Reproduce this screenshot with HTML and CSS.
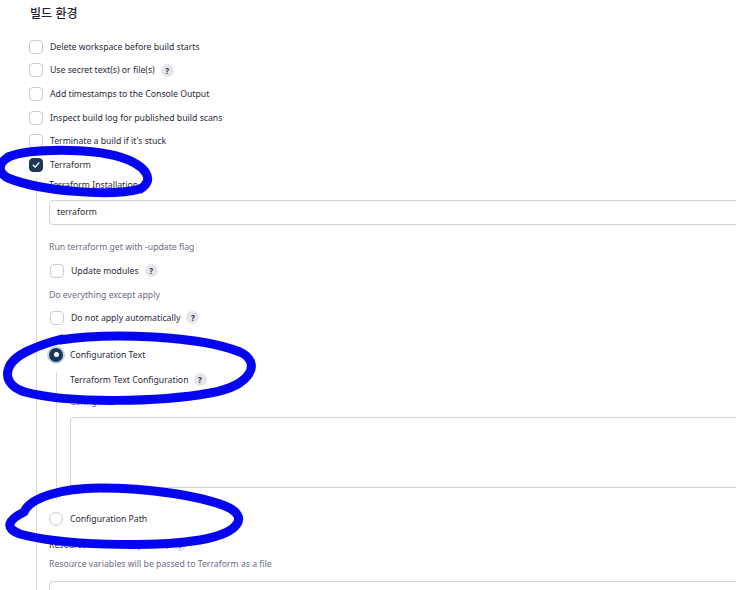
FILE: index.html
```html
<!DOCTYPE html>
<html lang="ko">
<head>
    <meta charset="UTF-8">
    <title>빌드 환경</title>
    <link rel="stylesheet" href="styles.css">
</head>
<body>
    <div class="page">
        <div class="title">빌드 환경</div>

        <div class="check-row"><span class="box"></span><span>Delete workspace before build starts</span></div>
        <div class="check-row"><span class="box"></span><span>Use secret text(s) or file(s)</span><span class="help">?</span></div>
        <div class="check-row"><span class="box"></span><span>Add timestamps to the Console Output</span></div>
        <div class="check-row"><span class="box"></span><span>Inspect build log for published build scans</span></div>
        <div class="check-row"><span class="box"></span><span>Terminate a build if it's stuck</span></div>
        <div class="check-row">
            <span class="box checked">
                <svg width="10" height="10" viewBox="0 0 10 10"><path d="M2.2 5.2 L4.2 7.1 L7.9 2.9" fill="none" stroke="#fff" stroke-width="1.4" stroke-linecap="round" stroke-linejoin="round"/></svg>
            </span>
            <span>Terraform</span>
        </div>

        <div class="nested">
            <div class="field-label">Terraform Installation</div>
            <div class="input first-input">terraform</div>

            <div class="desc desc-run">Run terraform get with -update flag</div>
            <div class="check-row inner-row"><span class="box"></span><span>Update modules</span><span class="help">?</span></div>
            <div class="desc desc-do">Do everything except apply</div>
            <div class="check-row inner-row row-apply"><span class="box"></span><span>Do not apply automatically</span><span class="help">?</span></div>

            <div class="check-row radio-text"><span class="radio on"></span><span>Configuration Text</span></div>
            <div class="radio-nested">
                <div class="field-label">Terraform Text Configuration <span class="help">?</span></div>
                <div class="desc desc-hidden">Config</div>
                <div class="textarea"></div>
            </div>

            <div class="check-row radio-path"><span class="radio"></span><span>Configuration Path</span></div>
            <div class="field-label vars-label">Resource Variables (Optional) <span class="help">?</span></div>
            <div class="desc desc-vars">Resource variables will be passed to Terraform as a file</div>
            <div class="input last-input"></div>
        </div>
    </div>

    <!-- 손으로 그린 표시 -->
    <svg class="marks" width="736" height="590" viewBox="0 0 736 590">
        <g fill="none" stroke="#0505f0" stroke-width="9" stroke-linecap="round" stroke-linejoin="round">
            <path d="M8 157 C 30 148, 90 148, 120 157 C 146 165, 156 180, 140 189 C 110 197, 40 191, 8 178 C -4 172, -2 160, 14 155"/>
            <path d="M60 340 C 110 332, 200 336, 240 352 C 262 362, 252 386, 210 393 C 160 402, 70 404, 25 392 C 0 384, 2 362, 30 350 C 40 345, 50 342, 62 339"/>
            <path d="M24 512 C 30 498, 60 488, 100 488 C 150 488, 200 496, 225 506 C 250 516, 240 533, 200 540 C 150 548, 60 545, 20 534 C 4 528, 8 520, 24 512"/>
        </g>
    </svg>
</body>
</html>
```

FILE: styles.css
```css
* {
    margin: 0;
    padding: 0;
    box-sizing: border-box;
}

body {
    font-family: "Noto Sans", "Noto Sans CJK KR", sans-serif;
    font-size: 8.7px;
    color: #2a2b3a;
    background-color: #ffffff;
    overflow: hidden;
    position: relative;
    width: 736px;
    height: 590px;
}

.page {
    padding-left: 29px;
    width: 760px;
}

.title {
    font-family: "Noto Sans CJK KR", sans-serif;
    font-size: 12px;
    font-weight: 500;
    height: 26px;
    line-height: 26px;
    margin-bottom: 9px;
    padding-left: 1px;
    color: #222233;
}

.check-row {
    height: 23.6px;
    display: flex;
    align-items: center;
    gap: 7px;
}

.box {
    width: 14px;
    height: 14px;
    border: 1.5px solid #c6cdd5;
    border-radius: 4px;
    display: flex;
    align-items: center;
    justify-content: center;
    flex-shrink: 0;
}

.box.checked {
    background-color: #1c3957;
    border-color: #1c3957;
}

.help {
    display: inline-flex;
    align-items: center;
    justify-content: center;
    width: 13px;
    height: 13px;
    border-radius: 50%;
    background-color: #e6e6ea;
    font-size: 8px;
    font-weight: 700;
    color: #2a2b3a;
    margin-left: -1px;
}

.nested {
    margin-left: 7px;
    border-left: 1px solid #d5dae0;
    padding-left: 12px;
    padding-bottom: 20px;
}

.field-label {
    line-height: 16px;
    height: 16px;
    display: flex;
    align-items: center;
    gap: 6px;
}

.input {
    height: 25px;
    border: 1px solid #ccd3db;
    border-radius: 4px;
    padding-left: 7px;
    display: flex;
    align-items: center;
    width: 720px;
}

.first-input {
    margin-top: 7px;
}

.desc {
    line-height: 16px;
    height: 16px;
    color: #6b6c87;
}

.desc-run {
    margin-top: 14px;
}

.inner-row {
    height: 24px;
    margin-top: 4px;
    padding-left: 1px;
}

.desc-do {
    margin-top: 4px;
}

.row-apply {
    margin-top: 3px;
}

.radio-text {
    height: 24px;
    margin-top: 13px;
}

.radio {
    width: 14px;
    height: 14px;
    border-radius: 50%;
    border: 1.5px solid #c6cdd5;
    flex-shrink: 0;
}

.radio.on {
    border: none;
    background-color: #1c3957;
    box-shadow: 0 0 0 2px #c6d4e0;
    display: flex;
    align-items: center;
    justify-content: center;
}

.radio.on::after {
    content: "";
    width: 5px;
    height: 5px;
    border-radius: 50%;
    background-color: #ffffff;
}

.radio-nested {
    margin-top: 5px;
    margin-left: 7px;
    border-left: 1px solid #d5dae0;
    padding-left: 13px;
    padding-bottom: 12px;
}

.desc-hidden {
    margin-top: 6px;
}

.textarea {
    margin-top: 7px;
    height: 71px;
    border: 1px solid #ccd3db;
    border-radius: 4px;
    width: 700px;
}

.radio-path {
    height: 24px;
    margin-top: 7px;
}

.vars-label {
    margin-top: 6px;
}

.desc-vars {
    margin-top: 3px;
}

.last-input {
    margin-top: 9px;
}

.marks {
    position: absolute;
    top: 0;
    left: 0;
    pointer-events: none;
}
```
